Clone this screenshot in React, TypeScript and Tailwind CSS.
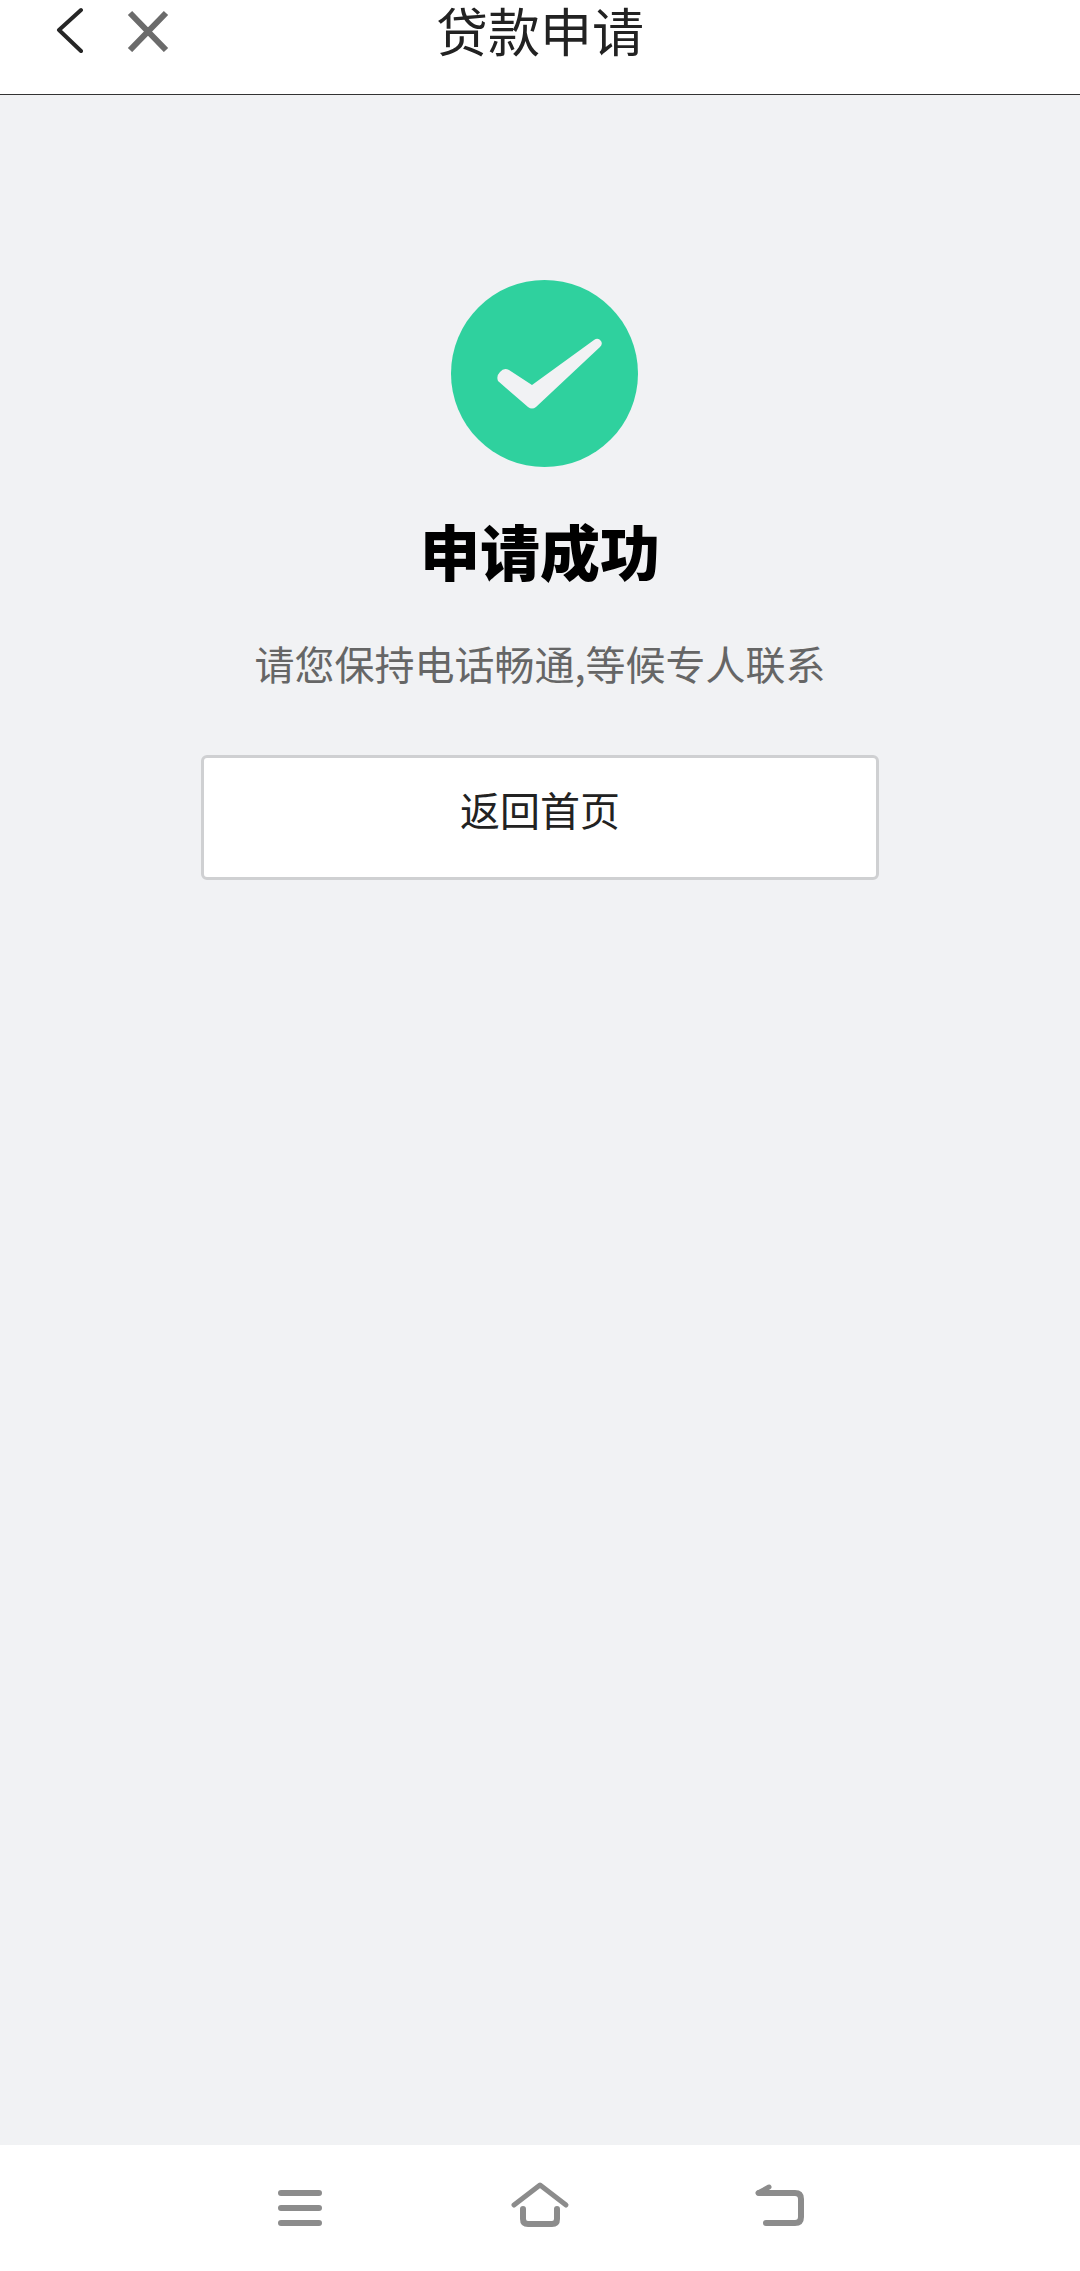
const cjk = "font-['Noto_Sans_CJK_SC','Noto_Sans',sans-serif]";

function NavIcons() {
  return (
    <div className="flex h-[126px] items-start justify-center bg-white pt-[34px]">
      <div className="flex w-[240px] justify-center">
        <svg width="60" height="50" viewBox="0 0 60 50" fill="none" stroke="#8c8c8c" strokeWidth="6" strokeLinecap="round">
          <path d="M11 14H49M11 29H49M11 44H49" />
        </svg>
      </div>
      <div className="flex w-[240px] justify-center">
        <svg width="60" height="50" viewBox="0 0 60 50" fill="none" stroke="#8c8c8c" strokeWidth="5" strokeLinecap="round" strokeLinejoin="round">
          <path d="M4 26L30 6L56 26" />
          <path d="M13 30V40Q13 45 18 45H42Q47 45 47 40V30" strokeWidth="6" />
        </svg>
      </div>
      <div className="flex w-[240px] justify-center">
        <svg width="60" height="50" viewBox="0 0 60 50" fill="none" stroke="#8c8c8c" strokeWidth="6" strokeLinecap="round" strokeLinejoin="round">
          <path d="M9 14H45Q51 14 51 20V38Q51 44 45 44H16" />
          <path d="M8 14L19 8" strokeWidth="5" />
        </svg>
      </div>
    </div>
  );
}

export default function App() {
  return (
    <div className={`flex h-[2271px] w-[1080px] flex-col overflow-hidden bg-[#f1f2f4] ${cjk}`}>
      <header className="relative h-[95px] shrink-0 border-b border-[#333] bg-white">
        <div className="flex items-start pl-[55px] pt-[7px]">
          <svg width="30" height="46" viewBox="0 0 30 46" fill="none" stroke="#262626" strokeWidth="4" strokeLinecap="round" strokeLinejoin="round">
            <path d="M26 3L4 23L26 44" />
          </svg>
          <svg className="ml-[40px] mt-[3px]" width="44" height="42" viewBox="0 0 44 42" fill="none" stroke="#6b6b6b" strokeWidth="6">
            <path d="M5 3L41 40M41 3L5 40" />
          </svg>
        </div>
        <h1 className="absolute inset-x-0 top-0 text-center text-[52px] leading-[60px] font-normal text-[#222]">
          贷款申请
        </h1>
      </header>

      <main className="flex flex-1 flex-col items-center">
        <svg className="ml-[9px] mt-[185px]" width="187" height="187" viewBox="0 0 187 187">
          <circle cx="93.5" cy="93.5" r="93.5" fill="#2fd19e" />
          <path
            d="M47 101Q45 96 49 92Q53 87 58 90L81 105L143 60Q147 57 150 61Q152 64 149 67L85 127Q81 130 77 127Z"
            fill="#f1f2f4"
          />
        </svg>
        <h2 className="mt-[44px] text-[60px] leading-[78px] font-black text-black">申请成功</h2>
        <p className="mt-[44px] text-[40px] leading-[60px] text-[#666]">请您保持电话畅通,等候专人联系</p>
        <button className="mt-[62px] flex h-[125px] w-[678px] justify-center rounded-md border-[3px] border-[#cfd0d2] bg-white pt-[21px] text-[40px] leading-[60px] text-[#222]">
          返回首页
        </button>
      </main>

      <NavIcons />
    </div>
  );
}
